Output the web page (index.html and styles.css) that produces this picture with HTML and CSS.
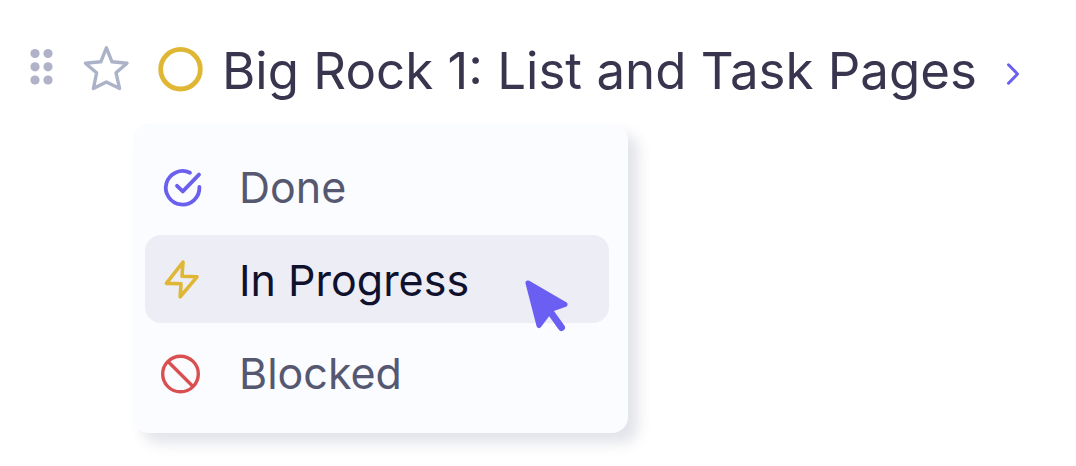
FILE: index.html
```html
<!DOCTYPE html>
<html lang="en">
<head>
    <meta charset="UTF-8">
    <meta name="viewport" content="width=device-width, initial-scale=1.0">
    <title>Task Status</title>
    <link rel="stylesheet" href="styles.css">
</head>
<body>
    <main class="task">
        <header class="task-header">
            <button type="button" class="icon-button" aria-label="Move task">
                <svg width="24" height="44" viewBox="0 0 24 44" fill="#afb2c8">
                    <circle cx="5" cy="6.5" r="4.6"/>
                    <circle cx="18" cy="6.5" r="4.6"/>
                    <circle cx="5" cy="19.8" r="4.6"/>
                    <circle cx="18" cy="19.8" r="4.6"/>
                    <circle cx="5" cy="33" r="4.6"/>
                    <circle cx="18" cy="33" r="4.6"/>
                </svg>
            </button>
            <button type="button" class="icon-button star" aria-label="Add to favorites">
                <svg width="48" height="48" viewBox="0 0 48 48" fill="none" stroke="#acb3c9" stroke-width="3.4" stroke-linejoin="round">
                    <path d="M24.4 2.8 L30 16.8 L45 18.2 L34 27.8 L37.6 43.6 L24.4 37 L11.4 43.6 L14.6 27.8 L3.4 18.2 L18.8 16.8 Z"/>
                </svg>
            </button>
            <button type="button" class="icon-button status" aria-label="Change status" aria-expanded="true">
                <svg width="46" height="46" viewBox="0 0 46 46" fill="none" stroke="#e0b735" stroke-width="4.8">
                    <circle cx="22.5" cy="23.2" r="19.8"/>
                </svg>
            </button>
            <h1>Big Rock 1: List and Task Pages</h1>
            <button type="button" class="icon-button open" aria-label="Open task">
                <svg width="16" height="24" viewBox="0 0 16 24" fill="none" stroke="#6b60ee" stroke-width="3" stroke-linecap="round" stroke-linejoin="round">
                    <path d="M3.5 2.8 L12.5 12 L3.5 21.2"/>
                </svg>
            </button>
        </header>

        <div class="status-menu" role="menu">
            <button type="button" class="status-item" role="menuitem">
                <svg width="44" height="44" viewBox="0 0 44 44" fill="none" stroke="#6b60ee" stroke-width="3.8" stroke-linecap="round" stroke-linejoin="round">
                    <path d="M31 7.7 A16.8 16.8 0 1 0 40.4 22"/>
                    <path d="M18 20.8 L23.8 26.4 L40 9.6"/>
                </svg>
                Done
            </button>
            <button type="button" class="status-item active" role="menuitem">
                <svg width="44" height="44" viewBox="0 0 44 44" fill="none" stroke="#e0b735" stroke-width="3.6" stroke-linejoin="round">
                    <path d="M24 4 L7.4 25.4 L22 25.8 L21.2 38.8 L38 18.8 L23 18.2 Z"/>
                </svg>
                In Progress
            </button>
            <button type="button" class="status-item" role="menuitem">
                <svg width="44" height="44" viewBox="0 0 44 44" fill="none" stroke="#d95050" stroke-width="3.4">
                    <circle cx="21.5" cy="23" r="17.8"/>
                    <path d="M9 10.5 L34 35.5"/>
                </svg>
                Blocked
            </button>
            <svg class="pointer" width="48" height="60" viewBox="0 0 48 60" fill="#6b5ef2" stroke="#6b5ef2" stroke-linecap="round" stroke-linejoin="round">
                <path d="M5 8 L42 29.5 L28 34.5 L16 50.5 Z" stroke-width="5"/>
                <path d="M26 35 L38.5 52.5" stroke-width="7"/>
            </svg>
        </div>
    </main>
</body>
</html>
```
FILE: styles.css
```css
* {
    box-sizing: border-box;
}
body {
    font-family: 'Inter', sans-serif;
    background-color: #fff;
    color: #39354f;
    margin: 0;
}
button {
    font-family: inherit;
    border: none;
    background: none;
    cursor: pointer;
}
svg {
    display: block;
    flex-shrink: 0;
}
.task {
    padding: 33px 30px 32px;
}
.task-header {
    display: flex;
    align-items: center;
}
.icon-button {
    padding: 0;
}
.star {
    margin-left: 28px;
}
.status {
    margin-left: 28px;
}
h1 {
    font-size: 51px;
    font-weight: 400;
    line-height: 68px;
    margin: 0 0 0 18px;
    padding-top: 4px;
    white-space: nowrap;
}
.open {
    margin-left: 28px;
    padding-top: 10px;
}
.status-menu {
    position: relative;
    display: flex;
    flex-direction: column;
    gap: 5px;
    width: fit-content;
    min-width: 495px;
    margin: 19px 0 0 103px;
    padding: 18px 19px 17px 12px;
    background-color: #fbfcff;
    border-radius: 16px;
    box-shadow: 10px 10px 14px rgba(62, 68, 110, 0.15);
}
.status-item {
    display: flex;
    align-items: center;
    gap: 36px;
    padding: 13px 14px 11px;
    border-radius: 16px;
    color: #555870;
    font-size: 43px;
    line-height: 64px;
    text-align: left;
}
.status-item.active {
    background-color: #ededf5;
    color: #10122d;
}
/* mouse pointer over the active item */
.pointer {
    position: absolute;
    top: 151px;
    right: 57px;
    pointer-events: none;
}
```
